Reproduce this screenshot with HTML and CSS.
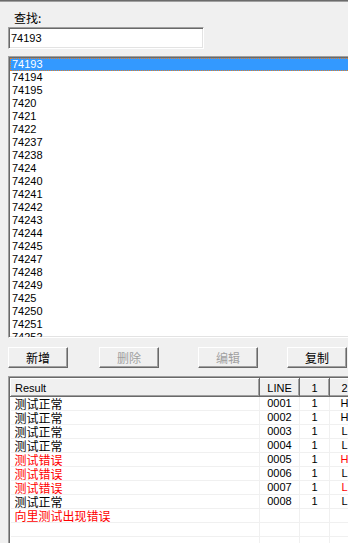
FILE: index.html
```html
<!DOCTYPE html>
<html>
<head>
<meta charset="utf-8">
<link rel="stylesheet" href="styles.css">
</head>
<body>
<div class="window">
  <div class="label">查找:</div>
  <div class="input">74193</div>
  <div class="listbox">
    <div class="item selected">74193</div>
    <div class="item">74194</div>
    <div class="item">74195</div>
    <div class="item">7420</div>
    <div class="item">7421</div>
    <div class="item">7422</div>
    <div class="item">74237</div>
    <div class="item">74238</div>
    <div class="item">7424</div>
    <div class="item">74240</div>
    <div class="item">74241</div>
    <div class="item">74242</div>
    <div class="item">74243</div>
    <div class="item">74244</div>
    <div class="item">74245</div>
    <div class="item">74247</div>
    <div class="item">74248</div>
    <div class="item">74249</div>
    <div class="item">7425</div>
    <div class="item">74250</div>
    <div class="item">74251</div>
    <div class="item">74252</div>
  </div>
  <div class="buttons">
    <div class="btn b1">新增</div>
    <div class="btn b2 disabled">删除</div>
    <div class="btn b3 disabled">编辑</div>
    <div class="btn b4">复制</div>
  </div>
  <div class="grid">
    <table>
      <colgroup>
        <col class="c-result"><col class="c-line"><col class="c-1"><col class="c-2"><col class="c-3">
      </colgroup>
      <thead>
        <tr><th class="left">Result</th><th>LINE</th><th>1</th><th>2</th><th></th></tr>
      </thead>
      <tbody>
        <tr><td class="cn">测试正常</td><td>0001</td><td>1</td><td>H</td><td></td></tr>
        <tr><td class="cn">测试正常</td><td>0002</td><td>1</td><td>H</td><td></td></tr>
        <tr><td class="cn">测试正常</td><td>0003</td><td>1</td><td>L</td><td></td></tr>
        <tr><td class="cn">测试正常</td><td>0004</td><td>1</td><td>L</td><td></td></tr>
        <tr><td class="cn red">测试错误</td><td>0005</td><td>1</td><td class="red">H</td><td></td></tr>
        <tr><td class="cn red">测试错误</td><td>0006</td><td>1</td><td>L</td><td></td></tr>
        <tr><td class="cn red">测试错误</td><td>0007</td><td>1</td><td class="red">L</td><td></td></tr>
        <tr><td class="cn">测试正常</td><td>0008</td><td>1</td><td>L</td><td></td></tr>
        <tr><td class="cn red">向里测试出现错误</td><td></td><td></td><td></td><td></td></tr>
        <tr><td></td><td></td><td></td><td></td><td></td></tr>
        <tr><td></td><td></td><td></td><td></td><td></td></tr>
      </tbody>
    </table>
  </div>
</div>
</body>
</html>
```
FILE: styles.css
```css
html, body {
  margin: 0;
  padding: 0;
  width: 348px;
  height: 543px;
  overflow: hidden;
  background: #f0f0f0;
}
.window {
  font-family: "Liberation Sans", "Noto Sans CJK SC", sans-serif;
  font-size: 11px;
  color: #000;
  border-top: 1px solid #6b6b6b;
  box-shadow: inset 0 1px 0 #a0a0a0;
  width: 348px;
  height: 542px;
  overflow: hidden;
}
.label {
  margin: 10px 0 0 14px;
  height: 14px;
  line-height: 14px;
  font-size: 12px;
  font-family: "Noto Sans CJK SC", sans-serif;
}
.input {
  box-sizing: border-box;
  margin: 2px 0 0 8px;
  width: 196px;
  height: 22px;
  background: #fff;
  border-top: 1px solid #a0a0a0;
  border-left: 1px solid #a0a0a0;
  border-right: 1px solid #fff;
  border-bottom: 1px solid #fff;
  box-shadow: inset 1px 1px 0 #696969, inset -1px -1px 0 #e3e3e3;
  padding: 0 0 0 2px;
  line-height: 20px;
  font-size: 11px;
}
.listbox {
  box-sizing: border-box;
  margin: 7px 0 0 8px;
  width: 350px;
  height: 282px;
  background: #fff;
  border-top: 1px solid #a0a0a0;
  border-left: 1px solid #a0a0a0;
  border-bottom: 1px solid #fff;
  box-shadow: inset 1px 1px 0 #696969, inset 0 -1px 0 #e3e3e3;
  padding: 1px 0 0 1px;
  overflow: hidden;
}
.item {
  height: 13px;
  line-height: 13px;
  padding-left: 2px;
  white-space: nowrap;
}
.item.selected {
  background: #3399ff;
  color: #fff;
  outline: 1px dotted #e0802a;
  outline-offset: -1px;
}
.buttons {
  display: flex;
  margin: 9px 0 0 8px;
  height: 21px;
}
.btn {
  box-sizing: border-box;
  width: 60px;
  height: 21px;
  background: #f0f0f0;
  border-top: 1px solid #fff;
  border-left: 1px solid #fff;
  border-right: 1px solid #696969;
  border-bottom: 1px solid #696969;
  box-shadow: inset -1px -1px 0 #a0a0a0;
  text-align: center;
  line-height: 19px;
  font-size: 12px;
  font-family: "Noto Sans CJK SC", sans-serif;
}
.btn.disabled { color: #a0a0a0; }
.b2 { margin-left: 31px; }
.b3 { margin-left: 39px; }
.b4 { margin-left: 29px; }
.grid {
  box-sizing: border-box;
  margin: 8px 0 0 8px;
  width: 360px;
  height: 170px;
  background: #fff;
  border-top: 1px solid #a0a0a0;
  border-left: 1px solid #a0a0a0;
  box-shadow: inset 1px 1px 0 #696969;
  padding: 1px 0 0 1px;
  overflow: hidden;
}
table {
  border-collapse: collapse;
  table-layout: fixed;
  width: 349px;
}
.c-result { width: 249px; }
.c-line { width: 40px; }
.c-1 { width: 30px; }
.c-2 { width: 30px; }
.c-3 { width: 30px; }
th {
  box-sizing: border-box;
  height: 18px;
  padding: 0;
  font-weight: normal;
  background: #f0f0f0;
  border-top: 1px solid #fff;
  border-left: 1px solid #fff;
  border-right: 1px solid #696969;
  border-bottom: 1px solid #696969;
  box-shadow: inset -1px -1px 0 #a0a0a0;
  text-align: center;
  font-size: 11px;
  line-height: 16px;
}
th.left { text-align: left; padding-left: 4px; }
td {
  height: 13px;
  padding: 0;
  border-right: 1px solid #f0f0f0;
  border-bottom: 1px solid #f0f0f0;
  text-align: center;
  line-height: 13px;
  white-space: nowrap;
  overflow: hidden;
}
td.cn {
  text-align: left;
  padding-left: 4px;
  font-size: 12px;
  font-family: "Noto Sans CJK SC", sans-serif;
}
.red { color: #ff0000; }
```
